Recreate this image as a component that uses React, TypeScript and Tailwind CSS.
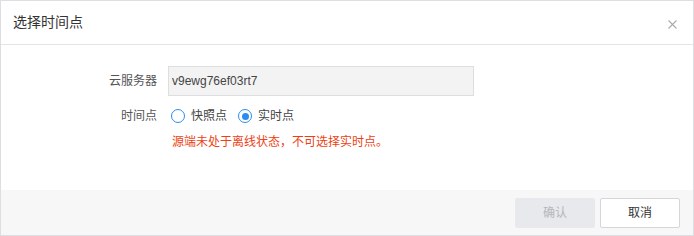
import { useState } from 'react'

const FONT = { fontFamily: '"Liberation Sans", "Noto Sans CJK SC", sans-serif' }

function Radio({ checked, label, onClick }: { checked: boolean; label: string; onClick: () => void }) {
  return (
    <label className="flex items-center cursor-pointer" onClick={onClick}>
      <span className="w-[14px] h-[14px] rounded-full border border-[#2d8cf0] bg-white flex items-center justify-center">
        {checked && <span className="w-[7px] h-[7px] rounded-full bg-[#2d8cf0]" />}
      </span>
      <span className="ml-[6px] text-[12px] text-[#444]">{label}</span>
    </label>
  )
}

export default function App() {
  const [mode, setMode] = useState<'snap' | 'live'>('live')

  return (
    <div style={FONT} className="w-[694px] h-[236px] border border-[#dddee1] bg-white flex flex-col">
      {/* header */}
      <div className="h-[44px] flex-shrink-0 border-b border-[#e3e4e8] flex items-center justify-between pl-[12px] pr-[16px]">
        <span className="text-[14px] text-[#333]">选择时间点</span>
        <svg width="9" height="9" viewBox="0 0 9 9" className="mt-[3px]">
          <path d="M0.5 0.5L8.5 8.5M8.5 0.5L0.5 8.5" stroke="#a9abb0" strokeWidth="1.1" />
        </svg>
      </div>

      {/* body */}
      <div className="flex-1 pt-[21px]">
        <div className="flex items-center">
          <div className="w-[156px] text-right text-[12px] text-[#555]">云服务器</div>
          <div className="ml-[11px] w-[306px] h-[30px] border border-[#dddee1] bg-[#f3f3f3] flex items-center px-[3px] text-[12px] text-[#444]">
            v9ewg76ef03rt7
          </div>
        </div>
        <div className="flex items-center mt-[10px] h-[20px]">
          <div className="w-[156px] text-right text-[12px] text-[#555]">时间点</div>
          <div className="ml-[14px] flex items-center gap-[11px]">
            <Radio checked={mode === 'snap'} label="快照点" onClick={() => setMode('snap')} />
            <Radio checked={mode === 'live'} label="实时点" onClick={() => setMode('live')} />
          </div>
        </div>
        <div className="ml-[171px] mt-[7px] text-[12px] text-[#ed3f14]">源端未处于离线状态，不可选择实时点。</div>
      </div>

      {/* footer */}
      <div className="h-[45px] flex-shrink-0 bg-[#f7f7f7] flex items-center justify-end gap-[5px] pr-[13px] pt-[1px]">
        <button className="w-[80px] h-[30px] rounded-[2px] bg-[#e7e9ec] text-[12px] text-[#b4b6ba] cursor-not-allowed">确认</button>
        <button className="w-[80px] h-[30px] rounded-[2px] bg-white border border-[#d4d6da] text-[12px] text-[#333]">取消</button>
      </div>
    </div>
  )
}
